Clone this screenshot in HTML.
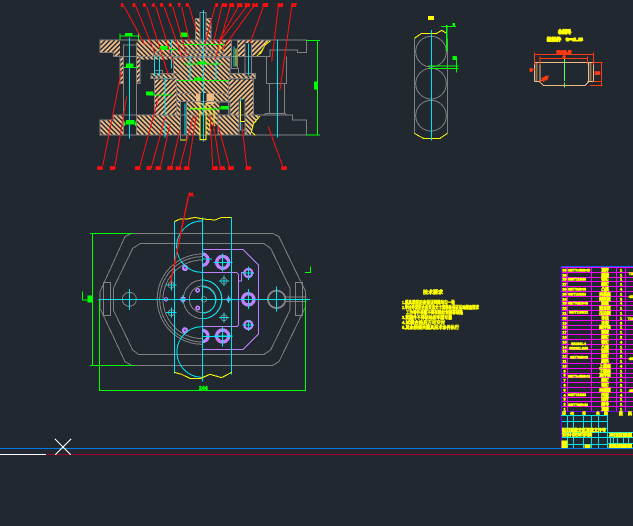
<!DOCTYPE html>
<html lang="zh">
<head>
<meta charset="utf-8">
<title>Mold drawing</title>
<style>
html,body{margin:0;padding:0;background:#212830;width:633px;height:526px;overflow:hidden}
svg{display:block;position:absolute;left:0;top:0}
text{font-family:"Liberation Sans","Noto Sans CJK SC",sans-serif;font-weight:bold}
</style>
</head>
<body>
<svg width="633" height="526" viewBox="0 0 633 526" xmlns="http://www.w3.org/2000/svg" shape-rendering="crispEdges">
<defs>
<pattern id="h1" patternUnits="userSpaceOnUse" width="10" height="10" patternTransform="rotate(45)"><rect width="10" height="10" fill="#212830"/><rect width="10" height="5.5" fill="#efbb85"/></pattern>
<pattern id="h2" patternUnits="userSpaceOnUse" width="10" height="10" patternTransform="rotate(-45)"><rect width="10" height="10" fill="#212830"/><rect width="10" height="5.5" fill="#efbb85"/></pattern>
</defs>
<rect width="633" height="526" fill="#212830"/>

<!-- section view -->
<g transform="translate(90,0) scale(.33333)" fill="none" stroke-width="3">
  <g stroke="none">
    <path fill="url(#h2)" d="M30 120H90V170H70V158H30Z"/>
    <path fill="url(#h1)" d="M140 120H400V170H250V178H140Z"/>
    <path fill="url(#h2)" d="M400 120H545L525 135L510 160L480 170H400Z"/>
    <path fill="url(#h2)" d="M140 170H150V250H140ZM90 170H100V250H90Z"/>
    <path fill="url(#h1)" d="M316 55H330V120H316ZM348 55H363V120H348Z"/>
    <path fill="url(#h1)" d="M250 172H420V240H250Z"/>
    <path fill="url(#h1)" d="M183 220H262V236H183ZM415 220H497V236H415Z"/>
    <path fill="url(#h2)" d="M193 238H262V345H193Z"/>
    <path fill="url(#h2)" d="M415 238H490V345H415Z"/>
    <path fill="url(#h1)" d="M260 240H415V345H260Z"/>
    <path fill="url(#h1)" d="M30 360H70V345H510L490 370L482 405H30Z"/>
    <path fill="#efbb85" d="M318 280H333V312H318ZM348 280H372V312H348Z"/>
  </g>
  <g stroke="#212830" fill="#212830">
    <rect x="100" y="135" width="40" height="270"/>
    <rect x="333" y="280" width="15" height="28"/>
    <rect x="272" y="305" width="18" height="115"/>
    <rect x="330" y="345" width="18" height="75"/>
    <rect x="390" y="306" width="30" height="36"/>
    <rect x="447" y="300" width="18" height="105"/>
    <rect x="425" y="120" width="18" height="85"/>
    <rect x="465" y="130" width="20" height="98"/>
    <rect x="360" y="380" width="24" height="25"/>
  </g>
  <g stroke="#808080">
    <path d="M30 120H650V158H622V150H540V170H70V158H30Z"/>
    <path d="M30 360H70V345H607V360H650V405H30Z"/>
    <path d="M530 170V250H590V170M538 250V340H583V250M520 345L530 340H585L590 345"/>
    <path d="M100 135H140V345H100ZM100 345V405M140 345V405M90 170V250H100M150 170V250H140"/>
    <path d="M316 120V55H330V38H348V55H363V120M330 38V150H348V38"/>
    <path d="M193 236V345M490 236V345M183 220V236H262M415 220H497V236H415M183 220H262"/>
    <path d="M250 172H420M250 172V240M420 172V240M260 240V345M415 240V345M260 305H415M260 280H305M375 280H415"/>
    <path d="M272 305V420H290V305M330 345V420H348V345M360 345V405H384V345"/>
    <path d="M385 306H420V342M447 300V405H465V300M442 390H470V405"/>
    <path d="M425 120V205H443V120M465 130V228H485V130M415 205H445V222"/>
    <path d="M190 155H215V165H190ZM192 212H218V228H192M290 150H385M280 160H400"/>
  </g>
  <g stroke="#00e6f0">
    <path d="M118 112V415M340 30V425M562 118V412M244 118V205M193 170V228M208 170V228M225 230V412M300 170V240M378 170V240M285 310V405M452 295V390M432 140V200M475 130V225"/>
  </g>
  <g stroke="#ffff00">
    <path d="M330 310V418H348V310M360 315V392M372 330V392M300 325H365M438 145V200M452 305V365H465M390 130V150M272 420H288"/>
    <path d="M542 122L525 135L512 160L500 168M510 348L490 372L484 396L497 406"/>
  </g>
  <g stroke="#00ff00">
    <path d="M90 100V122M146 100V122M90 108H146M100 203H142M100 372H140M104 365V378M136 365V378"/>
    <path d="M275 133H405M282 192H395M262 241H415M296 327H405"/>
    <path d="M170 285H246M648 122H690M648 405H690M683 122V405M205 148H262"/>
  </g>
  <g fill="#00ff00" stroke="none">
    <rect x="105" y="99" width="22" height="10"/><rect x="108" y="190" width="22" height="13"/><rect x="108" y="360" width="25" height="12"/>
    <rect x="208" y="138" width="24" height="12"/><rect x="270" y="98" width="22" height="13"/><rect x="323" y="184" width="26" height="10"/>
    <rect x="312" y="232" width="26" height="10"/><rect x="392" y="318" width="23" height="11"/><rect x="168" y="275" width="22" height="10"/>
    <rect x="672" y="245" width="10" height="24"/>
  </g>
  <g stroke="#ff1010">
    <path d="M103 20L165 135M138 20L195 160M170 20L235 225M198 20L250 190M222 20L280 180M248 20L290 165M275 20L300 130M298 20L320 95"/>
    <path d="M375 20L345 130M395 20L370 130M420 20L375 180M445 20L385 125M470 20L392 120M490 20L395 150M520 20L480 130M565 20L545 185M605 20L570 270"/>
    <path d="M38 498L95 210M75 498L110 290M150 498L205 295M185 498L228 345M212 498L240 372M245 498L270 390M270 498L310 350M295 498L320 340"/>
    <path d="M368 498L360 345M390 498L370 370M418 498L385 380M470 498L455 370M578 498L535 380"/>
  </g>
  <g fill="#ff1010" stroke="#ff1010" stroke-width="3" font-size="14" text-anchor="middle">
    <text x="97" y="20">1</text><text x="132" y="20">2</text><text x="163" y="20">3</text><text x="190" y="20">4</text><text x="215" y="20">5</text><text x="241" y="20">6</text><text x="268" y="20">7</text><text x="292" y="20">8</text>
    <text x="380" y="20">9</text><text x="403" y="20">10</text><text x="425" y="20">11</text><text x="449" y="20">12</text><text x="472" y="20">13</text><text x="495" y="20">14</text><text x="526" y="20">15</text><text x="571" y="20">16</text><text x="612" y="20">17</text>
    <text x="30" y="508">30</text><text x="68" y="508">29</text><text x="143" y="508">28</text><text x="178" y="508">27</text><text x="205" y="508">26</text><text x="240" y="508">25</text><text x="265" y="508">24</text><text x="290" y="508">23</text>
    <text x="375" y="508">22</text><text x="397" y="508">21</text><text x="423" y="508">20</text><text x="475" y="508">19</text><text x="582" y="508">18</text>
  </g>
</g>

<!-- plan view -->
<g transform="translate(80,185) scale(.33333)" fill="none" stroke-width="3">
  <g stroke="#808080">
    <path d="M155 145H578L597 155L677 320V365L597 530L578 541H155L135 530L60 370V320L135 155Z"/>
    <path d="M180 176H552L572 190L630 310V375L572 495L552 508H175L158 495L100 375V310L158 190Z"/>
    <rect x="70" y="292" width="22" height="100"/><rect x="646" y="292" width="22" height="100"/>
    <circle cx="148" cy="343" r="21"/>
    <path d="M367 207A135 135 0 0 0 367 478M367 215A128 128 0 0 0 367 471M367 225A118 118 0 0 0 367 461"/>
    <circle cx="368" cy="343" r="58"/><circle cx="368" cy="343" r="40"/><circle cx="372" cy="343" r="8"/>
    <circle cx="432" cy="288" r="9"/><circle cx="432" cy="398" r="9"/><circle cx="274" cy="300" r="9"/><circle cx="274" cy="383" r="9"/>
    <circle cx="590" cy="343" r="26" stroke-width="6"/>
    <path d="M617 336H680M617 350H680"/>
  </g>
  <g stroke="#c080ff">
    <path d="M367 193H488L536 240V447L488 494H367"/>
    <path d="M367 262H470L475 268V420L470 425H367M475 288H484V262H490"/>
    <circle cx="428" cy="232" r="18" stroke-width="10"/><circle cx="428" cy="453" r="18" stroke-width="10"/>
    <circle cx="505" cy="264" r="12" stroke-width="7"/><circle cx="505" cy="420" r="12" stroke-width="7"/>
    <circle cx="505" cy="343" r="17" stroke-width="10"/>
    <path d="M367 207A17 17 0 0 1 367 241M367 436A17 17 0 0 1 367 470" stroke-width="10"/>
    <circle cx="315" cy="249" r="6" stroke-width="7"/><circle cx="315" cy="436" r="6" stroke-width="7"/>
    <circle cx="309" cy="343" r="6" stroke-width="5"/><circle cx="353" cy="316" r="5" stroke-width="5"/><circle cx="353" cy="369" r="5" stroke-width="5"/>
    <circle cx="446" cy="343" r="5" stroke-width="3"/><circle cx="258" cy="343" r="5" stroke-width="3"/>
  </g>
  <g stroke="#00e6f0">
    <path d="M55 343H690M367 97V590M455 97V568M283 110V565"/>
    <path d="M148 312V375M590 305V380M505 245V285M505 405V438M488 264H522M488 420H522M505 312V372M480 343H530"/>
    <path d="M428 205V260M400 232H458M428 425V485M400 453H458M367 222H396M367 455H458"/>
    <path d="M274 285V316M258 300H290M274 368V398M258 383H290M432 272V303M417 288H447M432 383V413M417 398H447M309 330V356M296 343H322M446 332V354M436 343H456"/>
    <path d="M367 108A77 77 0 0 0 367 262M367 425A76 76 0 0 0 367 577"/>
    <path d="M367 285A58 58 0 0 1 367 401M367 305A38 38 0 0 1 367 385"/>
  </g>
  <g stroke="#ffff00">
    <path d="M283 110L300 102H322L345 97L368 102L405 105L425 97H455M283 562L305 568L330 580H362L390 568L425 578L455 562"/>
  </g>
  <g stroke="#00ff00">
    <path d="M30 145H160M30 541H165M37 145V541M58 343V618M677 343V618M58 616H677M8 320V345H35M675 262H692V245"/>
  </g>
  <g fill="#00ff00" stroke="#00ff00" stroke-width="1.5" font-size="16" text-anchor="middle">
    <text x="370" y="615">244</text>
    <rect x="24" y="332" width="12" height="20"/>
  </g>
  <path d="M270 300L325 35" stroke="#ff1010" stroke-width="4"/>
  <text x="333" y="33" fill="#ff1010" stroke="#ff1010" stroke-width="2" font-size="14" text-anchor="middle">31</text>
</g>

<!-- punch side view and part -->
<g transform="translate(400,5) scale(.33333)" fill="none" stroke-width="3">
  <g stroke="#808080">
    <path d="M43 100V385M142 100V385"/>
    <circle cx="93" cy="140" r="46"/><circle cx="93" cy="236" r="46"/><circle cx="93" cy="332" r="46"/>
  </g>
  <path d="M43 100L65 85H110L125 76L140 85M43 385L70 400H120L142 385" stroke="#ffff00"/>
  <path d="M94 75V406" stroke="#00e6f0"/>
  <g stroke="#00ff00">
    <path d="M140 60V138" stroke-width="5"/><path d="M125 64H168M85 183H176M85 190H176M170 155V203"/>
  </g>
  <rect x="84" y="33" width="18" height="12" fill="#ffff00"/>
  <rect x="158" y="54" width="7" height="10" fill="#00ff00"/><rect x="158" y="153" width="12" height="12" fill="#00ff00"/>
  <g fill="#ffff00" stroke="#ffff00" stroke-width="3" font-size="13">
    <text x="475" y="86" textLength="38" lengthAdjust="spacingAndGlyphs">材料</text>
    <text x="441" y="108" textLength="42" lengthAdjust="spacingAndGlyphs">拉深件</text>
    <text x="498" y="108" textLength="50" lengthAdjust="spacingAndGlyphs">t=1.5</text>
  </g>
  <g stroke="#efbb85">
    <path d="M403 172H580V230H562M403 172V230H418M420 172V232L430 241H555L565 232V172"/>
    <path d="M410 175V230M572 175V230" stroke-width="6" stroke-dasharray="3 3"/>
  </g>
  <path d="M493 162V228M493 232V248" stroke="#60ff60"/>
  <g stroke="#ff3a10">
    <path d="M403 148H580M403 143V178M580 143V178M420 160H563M420 155V178M563 155V178"/>
    <path d="M580 172H608M570 241H608M604 172V241M580 230H604M388 193H405M420 230L447 212"/>
  </g>
  <g fill="#ff3a10" stroke="#ff3a10" stroke-width="3" font-size="14" text-anchor="middle">
    <text x="492" y="146" textLength="44" lengthAdjust="spacingAndGlyphs">R62.5</text>
    <text x="492" y="159">4</text>
    <text x="393" y="199">8</text><text x="592" y="208">10</text>
    <text x="437" y="225" transform="rotate(-30 437 225)">R3</text>
  </g>
</g>

<!-- technical requirements -->
<g fill="#ffff00" stroke="#ffff00" stroke-width=".5">
  <text x="423" y="294" font-size="5" textLength="20" lengthAdjust="spacing">技术要求</text>
  <g font-size="4.4">
    <text x="402" y="304" textLength="53" lengthAdjust="spacingAndGlyphs">1.模具装配后应保证间隙均匀一致</text>
    <text x="402" y="309" textLength="77" lengthAdjust="spacingAndGlyphs">2.导柱导套配合应灵活无卡滞现象保证运动精度要求</text>
    <text x="406" y="314" textLength="57" lengthAdjust="spacingAndGlyphs">工作零件表面不得有裂纹划痕等缺陷</text>
    <text x="402" y="319" textLength="50" lengthAdjust="spacingAndGlyphs">3.紧固件不得松动应牢固可靠</text>
    <text x="402" y="324" textLength="43" lengthAdjust="spacingAndGlyphs">4.试模合格后方可交付</text>
    <text x="402" y="329" textLength="57" lengthAdjust="spacingAndGlyphs">5.其余按相关模具技术条件执行</text>
  </g>
</g>

<!-- parts table -->
<g fill="none" stroke-width="1">
  <path stroke="#ff00ff" d="M561 267.5H633M561 272.5H633M561 277.5H633M561 281.5H633M561 286.5H633M561 291.5H633M561 296.5H633M561 301.5H633M561 305.5H633M561 310.5H633M561 315.5H633M561 320.5H633M561 325.5H633M561 329.5H633M561 334.5H633M561 339.5H633M561 344.5H633M561 349.5H633M561 353.5H633M561 358.5H633M561 363.5H633M561 368.5H633M561 373.5H633M561 377.5H633M561 382.5H633M561 387.5H633M561 392.5H633M561 397.5H633M561 401.5H633M561 406.5H633"/>
  <path stroke="#ff00ff" d="M567.5 267V411M591.5 267V411M616.5 267V411M625.5 267V411"/>
  <path stroke="#7000ff" d="M561.5 267V448M561 411.5H633"/>
  <path stroke="#1060ff" d="M561 266.5H633"/>
</g>
<g fill="#ffff00" stroke="#ffff00" stroke-width=".6" font-size="3.8">
  <g text-anchor="middle">
    <text x="564.5" y="271.5">30</text><text x="564.5" y="276.5">29</text><text x="564.5" y="280.5">28</text><text x="564.5" y="285.5">27</text><text x="564.5" y="290.5">26</text><text x="564.5" y="295.5">25</text><text x="564.5" y="300.5">24</text><text x="564.5" y="304.5">23</text><text x="564.5" y="309.5">22</text><text x="564.5" y="314.5">21</text>
    <text x="564.5" y="319.5">20</text><text x="564.5" y="324.5">19</text><text x="564.5" y="328.5">18</text><text x="564.5" y="333.5">17</text><text x="564.5" y="338.5">16</text><text x="564.5" y="343.5">15</text><text x="564.5" y="348.5">14</text><text x="564.5" y="352.5">13</text><text x="564.5" y="357.5">12</text><text x="564.5" y="362.5">11</text>
    <text x="564.5" y="367.5">10</text><text x="564.5" y="372.5">9</text><text x="564.5" y="376.5">8</text><text x="564.5" y="381.5">7</text><text x="564.5" y="386.5">6</text><text x="564.5" y="391.5">5</text><text x="564.5" y="396.5">4</text><text x="564.5" y="400.5">3</text><text x="564.5" y="405.5">2</text><text x="564.5" y="410.5">1</text>
    <text x="621" y="271.5">1</text><text x="621" y="276.5">1</text><text x="621" y="280.5">1</text><text x="621" y="285.5">1</text><text x="621" y="290.5">4</text><text x="621" y="295.5">1</text><text x="621" y="300.5">2</text><text x="621" y="304.5">4</text><text x="621" y="309.5">1</text><text x="621" y="314.5">1</text>
    <text x="621" y="319.5">1</text><text x="621" y="324.5">3</text><text x="621" y="328.5">1</text><text x="621" y="333.5">1</text><text x="621" y="338.5">2</text><text x="621" y="343.5">4</text><text x="621" y="348.5">1</text><text x="621" y="352.5">1</text><text x="621" y="357.5">2</text><text x="621" y="362.5">1</text>
    <text x="621" y="367.5">4</text><text x="621" y="372.5">1</text><text x="621" y="376.5">1</text><text x="621" y="381.5">1</text><text x="621" y="386.5">2</text><text x="621" y="391.5">1</text><text x="621" y="396.5">4</text><text x="621" y="400.5">1</text><text x="621" y="405.5">1</text><text x="621" y="410.5">1</text>
    <text x="605" y="271.5">顶杆</text><text x="605" y="276.5">模柄</text><text x="605" y="280.5">销钉</text><text x="605" y="285.5">螺钉</text><text x="605" y="290.5">凸模</text><text x="605" y="295.5">凹模座</text><text x="605" y="300.5">卸料板</text><text x="605" y="304.5">垫板</text><text x="605" y="309.5">固定板</text><text x="605" y="314.5">压边圈</text>
    <text x="605" y="319.5">导柱</text><text x="605" y="324.5">导套</text><text x="605" y="328.5">推件块</text><text x="605" y="333.5">弹簧</text><text x="605" y="338.5">螺钉</text><text x="605" y="343.5">销钉</text><text x="605" y="348.5">凸模</text><text x="605" y="352.5">垫块</text><text x="605" y="357.5">螺钉</text><text x="605" y="362.5">挡料</text>
    <text x="605" y="367.5">上模座</text><text x="605" y="372.5">下模座</text><text x="605" y="376.5">顶件块</text><text x="605" y="381.5">螺钉</text><text x="605" y="386.5">销钉</text><text x="605" y="391.5">凹模板</text><text x="605" y="396.5">托板</text><text x="605" y="400.5">拉杆</text><text x="605" y="405.5">螺母</text><text x="605" y="410.5">顶板</text>
  </g>
  <g>
    <text x="568" y="271.5" textLength="22" lengthAdjust="spacingAndGlyphs">GB/T70-85M8×25</text>
    <text x="568" y="280.5" textLength="18" lengthAdjust="spacingAndGlyphs">GB/T119M6</text>
    <text x="568" y="290.5" textLength="18" lengthAdjust="spacingAndGlyphs">GB/T70M8×30</text>
    <text x="568" y="295.5" textLength="18" lengthAdjust="spacingAndGlyphs">GB/T119M10</text>
    <text x="568" y="304.5" textLength="20" lengthAdjust="spacingAndGlyphs">GB/T70M10×40</text>
    <text x="569" y="313.5" textLength="19" lengthAdjust="spacingAndGlyphs">GB/T119M12</text>
    <text x="571" y="345" textLength="15" lengthAdjust="spacingAndGlyphs">GB2861-4</text>
    <text x="569" y="349.5" textLength="19" lengthAdjust="spacingAndGlyphs">GB2861.6M6</text>
    <text x="570" y="358.5" textLength="18" lengthAdjust="spacingAndGlyphs">GB/T70M6×20</text>
    <text x="568" y="377.5" textLength="22" lengthAdjust="spacingAndGlyphs">GB/T70-85M8×16</text>
    <text x="568" y="396" textLength="18" lengthAdjust="spacingAndGlyphs">GB/T119M8</text>
    <text x="568" y="406" textLength="20" lengthAdjust="spacingAndGlyphs">GB/T70M5×10</text>
  </g>
  <g text-anchor="middle">
    <text x="631" y="275">T8</text><text x="631" y="298">45</text><text x="631" y="320">T10</text><text x="631" y="360">45</text><text x="631" y="392">45</text>
    <text x="564" y="415">序</text><text x="572" y="415">代</text><text x="584" y="415">号</text><text x="598" y="415">名</text><text x="606" y="415">称</text><text x="621" y="415">数</text><text x="630" y="415">料</text>
  </g>
</g>
<!-- title block -->
<g fill="none">
  <path stroke="#00e6f0" d="M561 415.5H608M561 421.5H608M561 428.5H608M561 432.5H633M561 437.5H633M561 444.5H608M608 443.5H633M608 448H633M567.5 416V448M573.5 416V448M583.5 416V448M591.5 416V448M598.5 416V448M607.5 416V448M610.5 433V448M613.5 433V448M617.5 433V448M623.5 433V448M628.5 433V448"/>
  <path stroke="#7000ff" d="M561.5 416V448"/>
</g>
<g fill="#ffff00" stroke="#ffff00" stroke-width=".6" font-size="3.8">
  <text x="562" y="431.5" textLength="44" lengthAdjust="spacingAndGlyphs">标记处数分区更改文件号</text>
  <text x="562" y="436" textLength="30" lengthAdjust="spacingAndGlyphs">设计校对审核</text>
  <text x="609" y="436.5" textLength="23" lengthAdjust="spacingAndGlyphs">冲压拉深模</text>
  <text x="609" y="447.5" textLength="23" lengthAdjust="spacingAndGlyphs">装配图纸图</text>
  <rect x="562" y="441" width="5" height="7"/>
  <rect x="585" y="445" width="5" height="3"/>
</g>

<!-- baseline and crosshair -->
<path d="M0 448.5H633" stroke="#0078e8" stroke-width="1" fill="none"/>
<path d="M46 454.5H633" stroke="#a0002a" stroke-width="1" fill="none"/>
<path d="M0 454.5H46" stroke="#ffffff" stroke-width="1" fill="none"/>
<path d="M55 439L71 455M71 439L55 455" stroke="#ffffff" stroke-width="1" fill="none"/>
</svg>
</body>
</html>
